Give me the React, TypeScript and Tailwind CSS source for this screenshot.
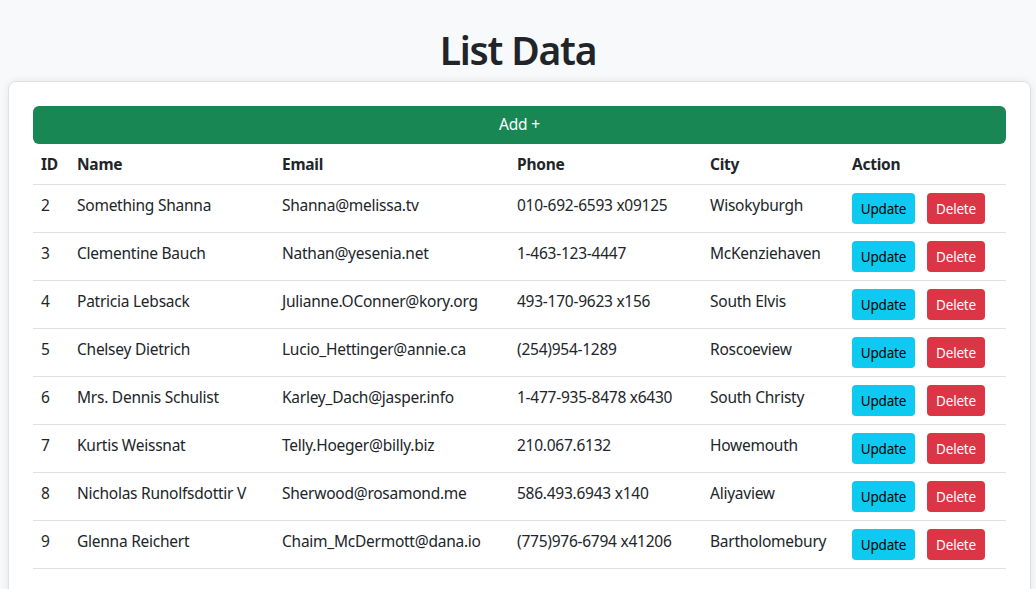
import React from "react";

const rows = [
  { id: 2, name: "Something Shanna", email: "Shanna@melissa.tv", phone: "010-692-6593 x09125", city: "Wisokyburgh" },
  { id: 3, name: "Clementine Bauch", email: "Nathan@yesenia.net", phone: "1-463-123-4447", city: "McKenziehaven" },
  { id: 4, name: "Patricia Lebsack", email: "Julianne.OConner@kory.org", phone: "493-170-9623 x156", city: "South Elvis" },
  { id: 5, name: "Chelsey Dietrich", email: "Lucio_Hettinger@annie.ca", phone: "(254)954-1289", city: "Roscoeview" },
  { id: 6, name: "Mrs. Dennis Schulist", email: "Karley_Dach@jasper.info", phone: "1-477-935-8478 x6430", city: "South Christy" },
  { id: 7, name: "Kurtis Weissnat", email: "Telly.Hoeger@billy.biz", phone: "210.067.6132", city: "Howemouth" },
  { id: 8, name: "Nicholas Runolfsdottir V", email: "Sherwood@rosamond.me", phone: "586.493.6943 x140", city: "Aliyaview" },
  { id: 9, name: "Glenna Reichert", email: "Chaim_McDermott@dana.io", phone: "(775)976-6794 x41206", city: "Bartholomebury" },
];

export default function App() {
  return (
    <div
      className="h-[589px] bg-[#f8f9fa] text-[#212529] overflow-hidden"
      style={{ fontFamily: '"Noto Sans", "Open Sans", sans-serif' }}
    >
      <h1 className="pt-[26px] text-center text-[39px] leading-[48px] font-semibold tracking-[-1.2px] mb-[7px]">List Data</h1>
      <div className="ml-[8px] mr-[5px] bg-white border border-[#dee2e6] rounded-[8px] shadow-[0_0_8px_rgba(0,0,0,0.08)] p-[24px] pb-[60px]">
        <button className="w-full h-[38px] bg-[#198754] text-white text-[15.5px] tracking-[-0.2px] rounded-[6px]">Add +</button>
        <table className="w-full table-fixed border-collapse text-[15.5px] tracking-[-0.25px] leading-[24px]">
          <colgroup>
            <col className="w-[36px]" />
            <col className="w-[205px]" />
            <col className="w-[235px]" />
            <col className="w-[193px]" />
            <col className="w-[142px]" />
            <col />
          </colgroup>
          <thead>
            <tr className="border-b border-[#dee2e6]">
              {["ID", "Name", "Email", "Phone", "City", "Action"].map((h) => (
                <th key={h} className="text-left font-bold px-[8px] py-[8px] whitespace-nowrap">{h}</th>
              ))}
            </tr>
          </thead>
          <tbody>
            {rows.map((r) => (
              <tr key={r.id} className="border-b border-[#dee2e6] align-top">
                <td className="px-[8px] py-[8px] whitespace-nowrap">{r.id}</td>
                <td className="px-[8px] py-[8px] whitespace-nowrap">{r.name}</td>
                <td className="px-[8px] py-[8px] whitespace-nowrap">{r.email}</td>
                <td className="px-[8px] py-[8px] whitespace-nowrap">{r.phone}</td>
                <td className="px-[8px] py-[8px] whitespace-nowrap">{r.city}</td>
                <td className="px-[8px] py-[8px] whitespace-nowrap">
                  <div className="flex gap-[12px]">
                    <button className="h-[31px] w-[63px] bg-[#0dcaf0] text-black text-[13.5px] tracking-[-0.2px] rounded-[4px]">Update</button>
                    <button className="h-[31px] w-[58px] bg-[#dc3545] text-white text-[13.5px] tracking-[-0.2px] rounded-[4px]">Delete</button>
                  </div>
                </td>
              </tr>
            ))}
          </tbody>
        </table>
      </div>
    </div>
  );
}
